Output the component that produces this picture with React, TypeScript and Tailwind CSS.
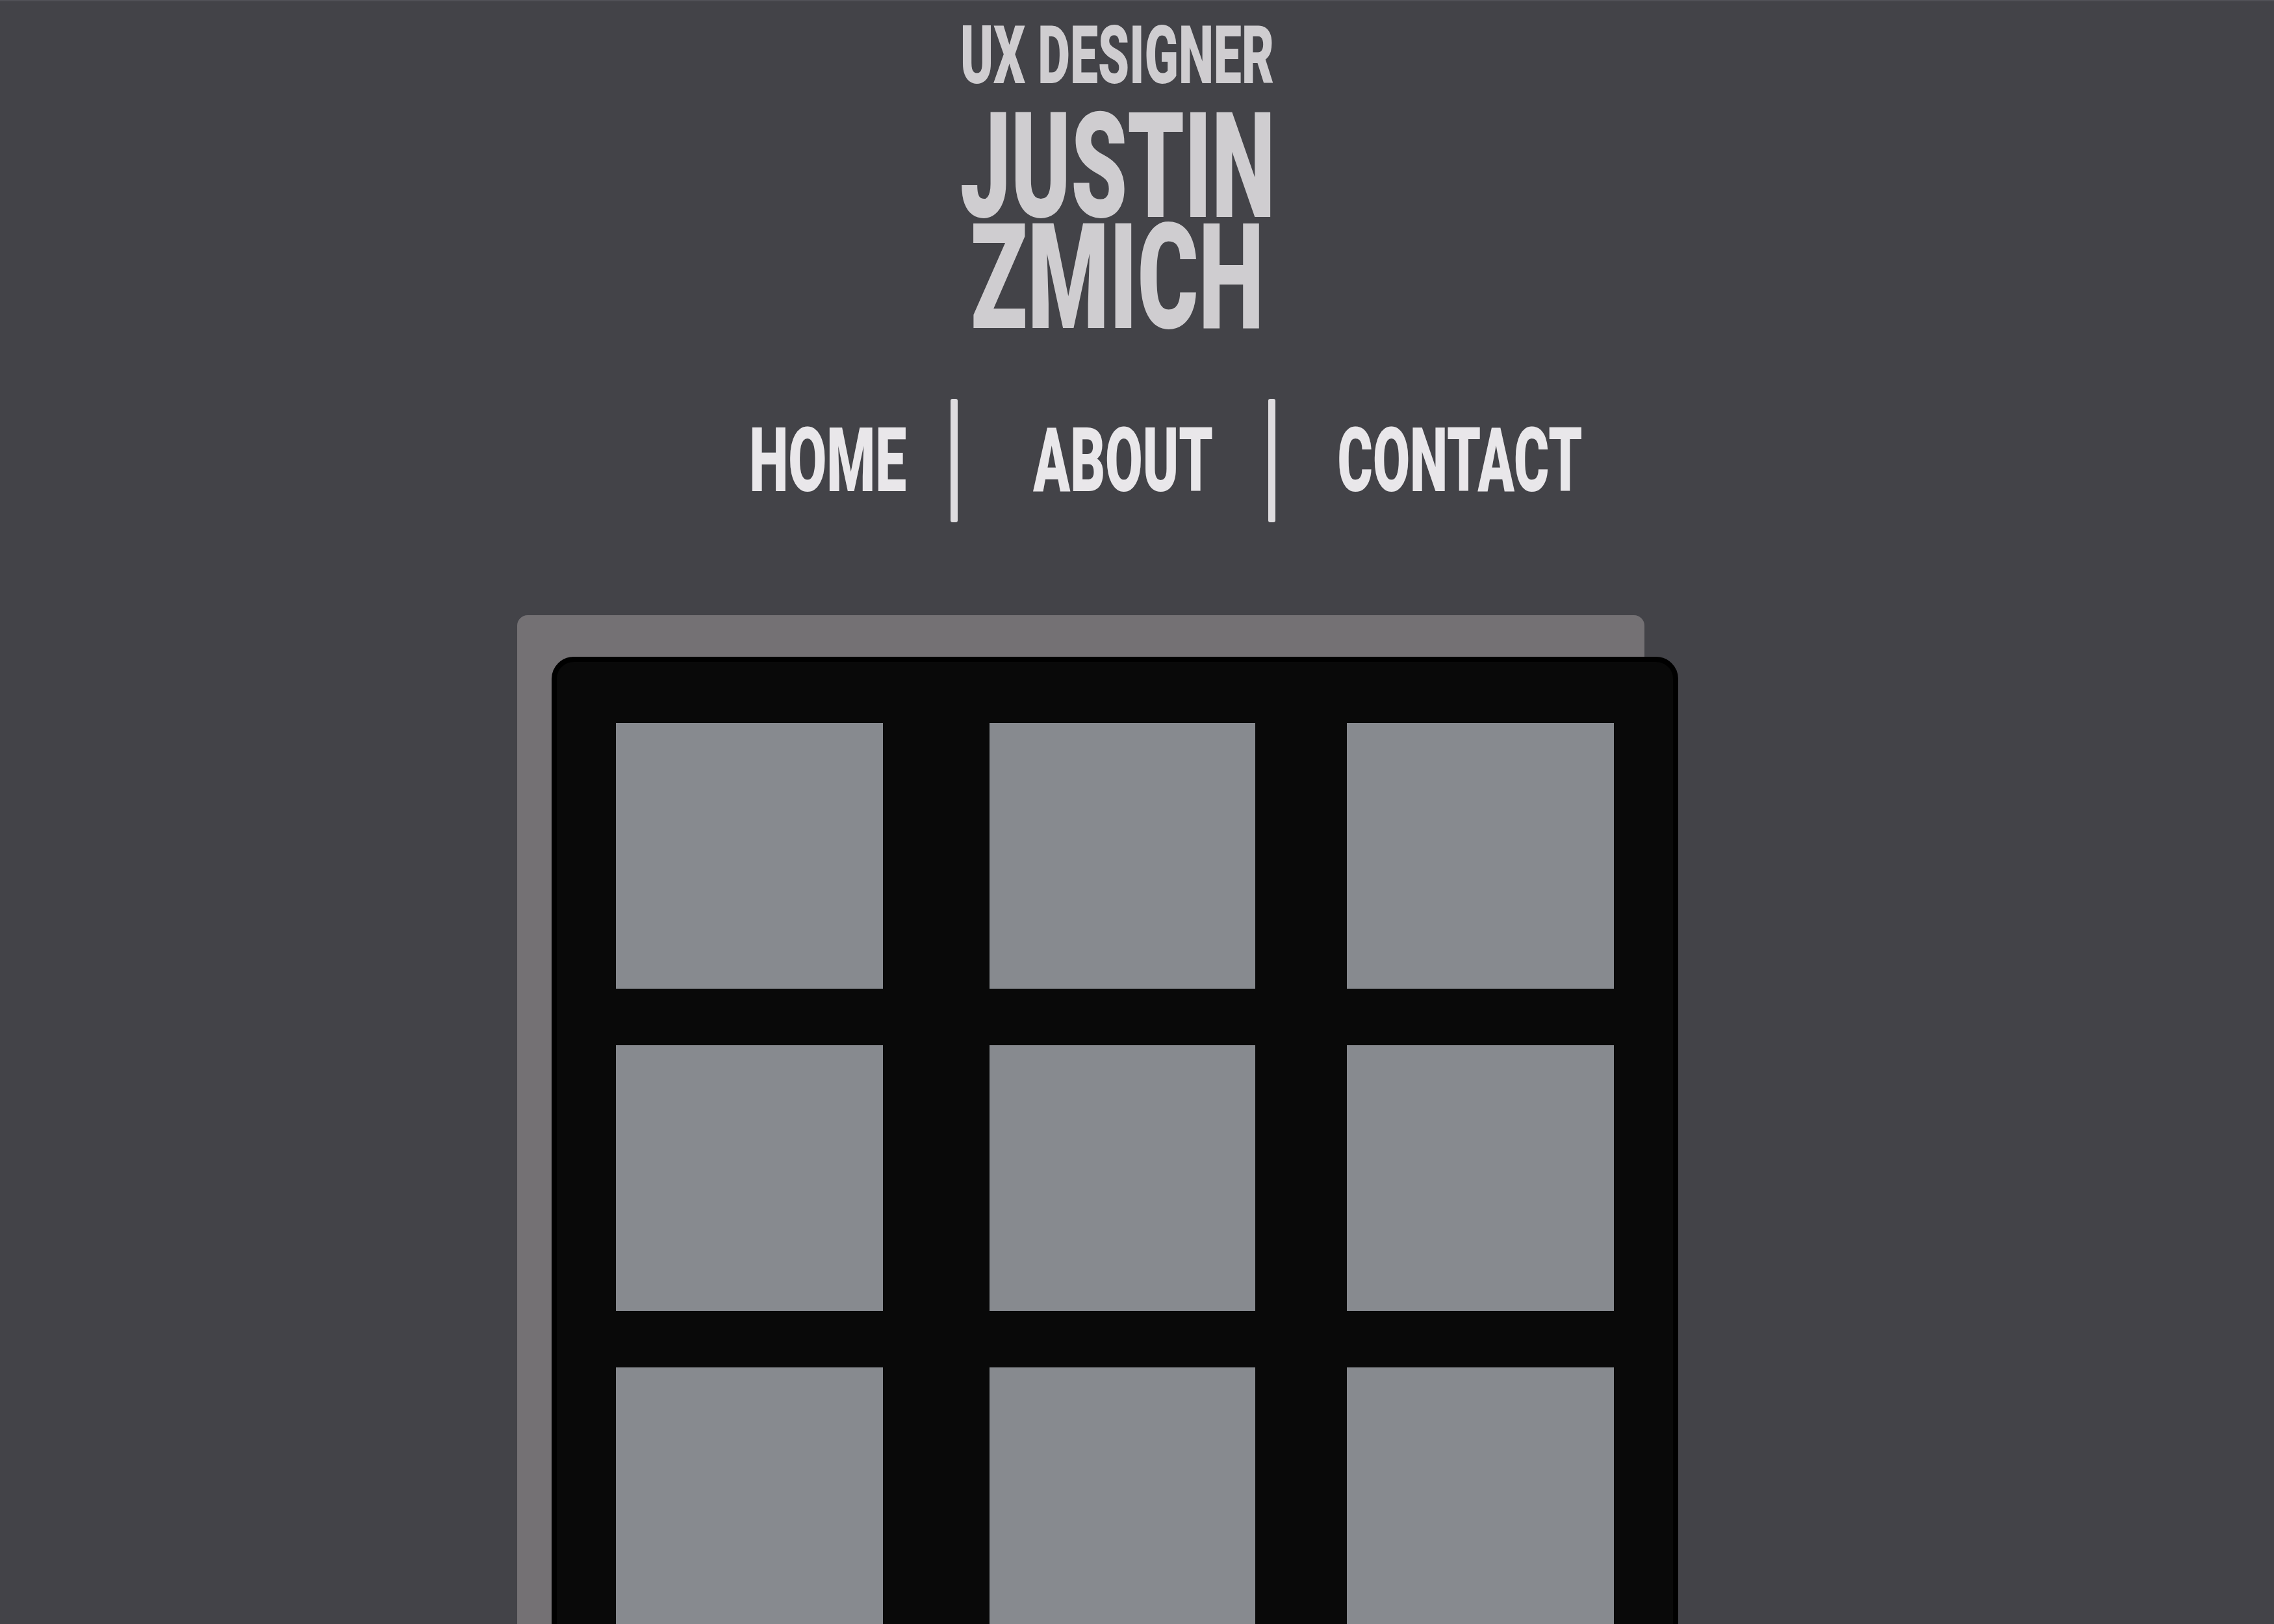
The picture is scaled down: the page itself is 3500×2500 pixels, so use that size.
const display = "font-['Roboto',_'Liberation_Sans',_sans-serif] font-black uppercase";

function Squeezed({ text, width, scale }: { text: string; width: string; scale: string }) {
  return (
    <span className={`mx-auto flex justify-center ${width}`}>
      <span className={`inline-block whitespace-nowrap ${scale}`}>{text}</span>
    </span>
  );
}

function Header() {
  return (
    <header className={`mr-[60px] flex flex-col items-center pt-[38px] text-[#cfcdd0] ${display}`}>
      <p className="text-[124px] leading-[92px]">
        <Squeezed text="UX Designer" width="w-[474px]" scale="scale-x-[0.62]" />
      </p>
      <h1 className="mt-[39px] text-[226px] leading-[171px]">
        <Squeezed text="Justin" width="w-[476px]" scale="scale-x-[0.615]" />
        <Squeezed text="Zmich" width="w-[440px]" scale="scale-x-[0.635]" />
      </h1>
    </header>
  );
}

function Nav() {
  return (
    <nav className={`ml-[89px] mt-[101px] flex items-center text-[138px] leading-[190px] text-[#e9e7ea] ${display}`}>
      <a href="#">
        <Squeezed text="Home" width="w-[239px]" scale="scale-x-[0.62]" />
      </a>
      <span className="ml-[69px] h-[190px] w-[11px] rounded-[3px] bg-[#dedcdf]" />
      <a href="#" className="ml-[118px]">
        <Squeezed text="About" width="w-[274px]" scale="scale-x-[0.605]" />
      </a>
      <span className="ml-[86px] h-[190px] w-[11px] rounded-[3px] bg-[#dedcdf]" />
      <a href="#" className="ml-[96px]">
        <Squeezed text="Contact" width="w-[375px]" scale="scale-x-[0.6]" />
      </a>
    </nav>
  );
}

function Gallery() {
  const rows = [0, 1, 2, 3];
  return (
    <section className="mr-[173px] mt-[143px] w-[1735px] rounded-[16px] bg-[#747174] pl-[53px] pt-[64px]">
      <div className="w-[1734px] rounded-[34px] border-[8px] border-black bg-[#090909] px-[91px] pt-[94px]">
        <div className="flex flex-col gap-[87px]">
          {rows.map((r) => (
            <div key={r} className="flex">
              <div className="h-[409px] w-[411px] bg-[#878a8f]" />
              <div className="ml-[164px] h-[409px] w-[410px] bg-[#878a8f]" />
              <div className="ml-[141px] h-[409px] w-[411px] bg-[#878a8f]" />
            </div>
          ))}
        </div>
      </div>
    </section>
  );
}

export default function App() {
  return (
    <div className="flex h-[2500px] w-full flex-col items-center overflow-hidden border-t-2 border-[#515157] bg-[#434348]">
      <Header />
      <Nav />
      <Gallery />
    </div>
  );
}
